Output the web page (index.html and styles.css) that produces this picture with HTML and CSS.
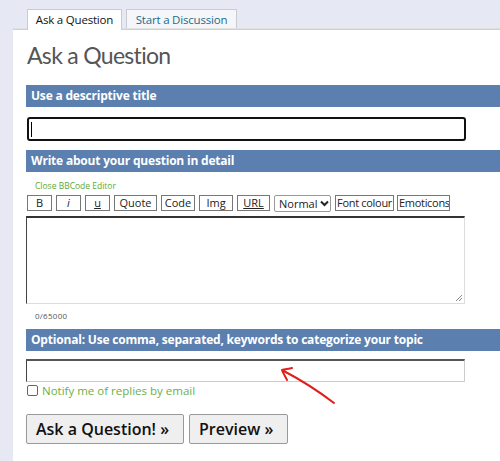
FILE: index.html
```html
<!DOCTYPE html>
<html>
<head>
<meta charset="utf-8">
<link rel="stylesheet" href="styles.css">
</head>
<body>
<div class="tabs">
  <div class="tab active">Ask a Question</div>
  <div class="tab">Start a Discussion</div>
</div>
<div class="panel">
  <h1 class="title">Ask a Question</h1>
  <div class="bar">Use a descriptive title</div>
  <div class="title-input"><span class="caret"></span></div>
  <div class="bar">Write about your question in detail</div>
  <div class="close-bb">Close BBCode Editor</div>
  <div class="toolbar">
    <span class="tb w25">B</span>
    <span class="tb w25 ital">i</span>
    <span class="tb w25 und">u</span>
    <span class="tb w43">Quote</span>
    <span class="tb w34">Code</span>
    <span class="tb w34">Img</span>
    <span class="tb w33 und">URL</span>
    <span class="sel">Normal <svg width="9" height="7" viewBox="0 0 9 7"><path d="M1 1.5 L4.5 5 L8 1.5" fill="none" stroke="#222" stroke-width="2"/></svg></span>
    <span class="tb w59 tight">Font colour</span>
    <span class="tb w53 tight">Emoticons</span>
  </div>
  <div class="textarea"><svg class="grip" width="8" height="8" viewBox="0 0 8 8"><path d="M7 1 L1 7 M7 4 L4 7" stroke="#888" stroke-width="1"/></svg></div>
  <div class="count">0/65000</div>
  <div class="bar">Optional: Use comma, separated, keywords to categorize your topic</div>
  <div class="tag-input"></div>
  <label class="notify"><span class="cb"></span>Notify me of replies by email</label>
  <div class="actions">
    <span class="btn">Ask a Question! »</span>
    <span class="btn">Preview »</span>
  </div>
  <svg class="arrow" width="70" height="50" viewBox="0 0 70 50"><path d="M65 43 C52 33 32 20 13 10 M13 10 C16 9 20 9 23 8 M13 10 C14 13 16 16 18 20" fill="none" stroke="#e0201c" stroke-width="2" stroke-linecap="round"/></svg>
</div>
</body>
</html>
```
FILE: styles.css
```css
html, body { margin: 0; padding: 0; }
body {
  background: #e6e9f3;
  font-family: "Open Sans", "DejaVu Sans", sans-serif;
  width: 500px;
  height: 461px;
  overflow: hidden;
}
.tabs {
  display: flex;
  gap: 4px;
  padding: 9px 0 0 27px;
  height: 20px;
}
.tab {
  box-sizing: border-box;
  height: 20px;
  border: 1px solid #c8cbd2;
  border-bottom: none;
  background: #f4f6fa;
  color: #1e6a8a;
  font-size: 11.5px;
  letter-spacing: -0.2px;
  line-height: 20px;
  text-align: center;
  white-space: nowrap;
}
.tab.active {
  background: #fff;
  color: #111;
  height: 21px;
  position: relative;
  z-index: 1;
  width: 95px;
}
.tab:nth-child(2) { width: 111px; }
.panel {
  position: relative;
  margin-left: 13px;
  background: #fff;
  border-top: 1px solid #cfcfcf;
  box-shadow: 0 -1px 0 #e0e0e0;
  height: 440px;
  padding-left: 13px;
}
.title {
  margin: 0;
  padding: 9px 0 0 1px;
  font-family: Lato, "Open Sans", sans-serif;
  font-weight: 400;
  font-size: 23px;
  line-height: 33px;
  color: #555;
  height: 46px;
  letter-spacing: -0.7px;
}
.bar {
  background: #5b7fae;
  color: #fff;
  font-weight: 700;
  font-size: 12px;
  letter-spacing: -0.2px;
  height: 22px;
  line-height: 22px;
  padding-left: 5px;
  white-space: nowrap;
}
.title-input {
  box-sizing: border-box;
  width: 439px;
  height: 24px;
  margin: 10px 0 9px 1px;
  border: 2px solid #111;
  border-radius: 3px;
  position: relative;
}
.caret {
  position: absolute;
  left: 2px;
  top: 3px;
  width: 1px;
  height: 15px;
  background: #000;
}
.close-bb {
  color: #5aaa3a;
  font-size: 8.5px;
  padding: 7px 0 0 9px;
  height: 15px;
  line-height: 14px;
}
.toolbar {
  display: flex;
  gap: 4px;
  margin-left: 1px;
  margin-top: 1px;
  height: 17px;
  align-items: flex-start;
}
.tb {
  box-sizing: border-box;
  height: 16px;
  border: 1px solid #777;
  font-size: 11px;
  line-height: 14px;
  text-align: center;
  color: #222;
  white-space: nowrap;
  overflow: hidden;
}
.tb.tight { padding: 0 1px; letter-spacing: -0.3px; text-align: left; }
.w25 { width: 25px; }
.w43 { width: 43px; }
.w34 { width: 34px; }
.w33 { width: 33px; }
.w59 { width: 59px; }
.w53 { width: 53px; margin-left: -1px; }
.ital { font-style: italic; }
.und { text-decoration: underline; }
.sel {
  box-sizing: border-box;
  height: 17px;
  width: 57px;
  border: 1px solid #999;
  border-radius: 2px;
  font-size: 11px;
  line-height: 15px;
  padding-left: 4px;
  color: #222;
  display: flex;
  align-items: center;
  gap: 3px;
}
.textarea {
  box-sizing: border-box;
  width: 439px;
  height: 88px;
  margin-top: 4px;
  border: 1px solid #ddd;
  border-top: 2px solid #333;
  border-left: 1px solid #444;
  position: relative;
}
.grip { position: absolute; right: 1px; bottom: 1px; }
.count {
  font-size: 8px;
  color: #555;
  padding: 5px 0 0 9px;
  height: 20px;
  line-height: 14px;
  letter-spacing: 0.3px;
}
.tag-input {
  box-sizing: border-box;
  width: 439px;
  height: 23px;
  margin-top: 8px;
  border: 1px solid #ccc;
  border-top: 2px solid #555;
  border-left: 1px solid #444;
}
.notify {
  display: flex;
  align-items: center;
  gap: 4px;
  color: #6aaf48;
  font-size: 11.5px;
  height: 14px;
  margin-left: 1px;
  margin-top: 1px;
}
.cb {
  box-sizing: border-box;
  width: 11px;
  height: 11px;
  border: 1px solid #666;
  border-radius: 2px;
  background: #fff;
}
.actions {
  display: flex;
  gap: 5px;
  margin-top: 17px;
}
.btn {
  box-sizing: border-box;
  height: 30px;
  border: 1px solid #999;
  border-radius: 2px;
  background: #efefef;
  font-size: 16px;
  font-weight: 600;
  line-height: 28px;
  padding: 0 9px;
  color: #111;
  white-space: nowrap;
}
.btn:first-child { width: 158px; }
.btn:last-child { width: 99px; }
.arrow {
  position: absolute;
  left: 256px;
  top: 330px;
}
```
